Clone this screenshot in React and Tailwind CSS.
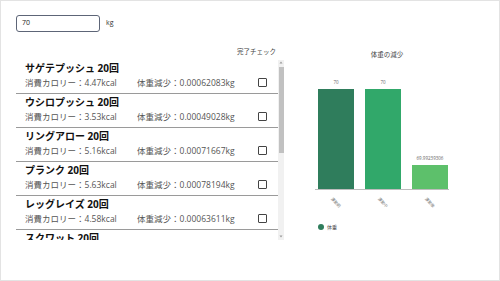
import { useState } from 'react'

// 運動メニュー一覧
const items = [
  { name: 'サゲテプッシュ', kcal: '4.47', kg: '0.00062083' },
  { name: 'ウシロプッシュ', kcal: '3.53', kg: '0.00049028' },
  { name: 'リングアロー', kcal: '5.16', kg: '0.00071667' },
  { name: 'プランク', kcal: '5.63', kg: '0.00078194' },
  { name: 'レッグレイズ', kcal: '4.58', kg: '0.00063611' },
  { name: 'スクワット', kcal: '4.12', kg: '0.00057222' },
]

// グラフのデータ
const bars = [
  { label: '70', h: 'h-[100px]', color: 'bg-[#2f7d5c]', axis: '運動前' },
  { label: '70', h: 'h-[100px]', color: 'bg-[#31a86a]', axis: '運動中' },
  { label: '69.99239306', h: 'h-[24px]', color: 'bg-[#5dc06b]', axis: '運動後' },
]

const Row = ({ item, onToggle }) => (
  <div className="box-border flex h-[34px] max-h-[34px] shrink-0 flex-col overflow-hidden border-b border-[#9a9a9a] pl-[9px]">
    <div className="mt-[2px] h-[13px] text-[10px] leading-[13px] font-bold text-[#111]">
      {item.name} 20回
    </div>
    <div className="mt-[2px] flex h-[11px] items-center text-[8.5px] leading-[11px] text-[#555]">
      <span className="w-[112px]">消費カロリー：{item.kcal}kcal</span>
      <span className="w-[121px]">体重減少：{item.kg}kg</span>
      <button
        onClick={onToggle}
        className="h-[9px] w-[9px] rounded-[1px] border border-[#444] bg-white p-0"
      />
    </div>
  </div>
)

const Chart = () => (
  <div className="ml-[16px] flex w-[174px] flex-col">
    <div className="mt-[3px] h-[12px] text-center text-[6.5px] leading-[12px] text-[#444]">体重の減少</div>
    <div className="ml-[15px] flex h-[129px] w-[134px] items-end gap-[11px] border-b border-[#bdbdbd] pl-[3px]">
      {bars.map((b, i) => (
        <div key={i} className="flex w-[36px] flex-col items-center justify-end">
          <div className="mb-[3px] h-[8px] text-[4.5px] leading-[8px] text-[#666]">{b.label}</div>
          <div className={`w-[36px] ${b.h} ${b.color}`} />
        </div>
      ))}
    </div>
    <div className="ml-[15px] flex h-[20px] w-[134px] gap-[11px] pl-[3px]">
      {bars.map((b, i) => (
        <div key={i} className="flex w-[36px] items-center justify-center pt-[4px]">
          <span className="rotate-45 text-[4px] leading-[5px] text-[#777]">{b.axis}</span>
        </div>
      ))}
    </div>
    <div className="ml-[18px] mt-[13px] flex h-[8px] items-center gap-[3px]">
      <span className="h-[6px] w-[6px] rounded-full bg-[#2f7d5c]" />
      <span className="text-[5px] leading-[8px] text-[#555]">体重</span>
    </div>
  </div>
)

export default function App() {
  const [checked, setChecked] = useState({})

  return (
    <div
      className="h-[281px] w-[500px] overflow-hidden border border-[#e3e3e3] bg-white pl-[15px] pt-[14px]"
      style={{ fontFamily: '"Open Sans", "Noto Sans CJK JP", sans-serif' }}
    >
      {/* 体重入力 */}
      <div className="flex h-[17px] items-center">
        <div className="flex h-[17px] w-[84px] items-center rounded-[3px] border border-[#5d6577] pl-[5px] text-[7px] text-[#222]">
          70
        </div>
        <span className="ml-[6px] text-[7px] text-[#333]">kg</span>
      </div>

      <div className="mt-[14px] flex">
        {/* 運動リスト */}
        <div className="flex w-[268px] flex-col">
          <div className="h-[12px] pr-[8px] text-right text-[6.5px] leading-[12px] text-[#444]">完了チェック</div>
          <div className="mt-[2px] flex h-[180px] items-start overflow-hidden">
            <div className="flex w-[262px] flex-col">
              {items.map((item, i) => (
                <Row key={i} item={item} onToggle={() => setChecked({ ...checked, [i]: !checked[i] })} />
              ))}
            </div>
            {/* スクロールバー */}
            <div className="flex h-[180px] w-[6px] flex-col items-center bg-[#f1f1f1]">
              <svg width="4" height="3" viewBox="0 0 4 3" className="mt-[1px]">
                <path d="M2 0.5 L3.5 2.5 L0.5 2.5 Z" fill="#999" />
              </svg>
              <div className="mt-[3px] h-[86px] w-[5px] bg-[#c1c1c1]" />
              <div className="flex-1" />
              <svg width="4" height="3" viewBox="0 0 4 3" className="mb-[2px]">
                <path d="M0.5 0.5 L3.5 0.5 L2 2.5 Z" fill="#999" />
              </svg>
            </div>
          </div>
        </div>

        <Chart />
      </div>
    </div>
  )
}
